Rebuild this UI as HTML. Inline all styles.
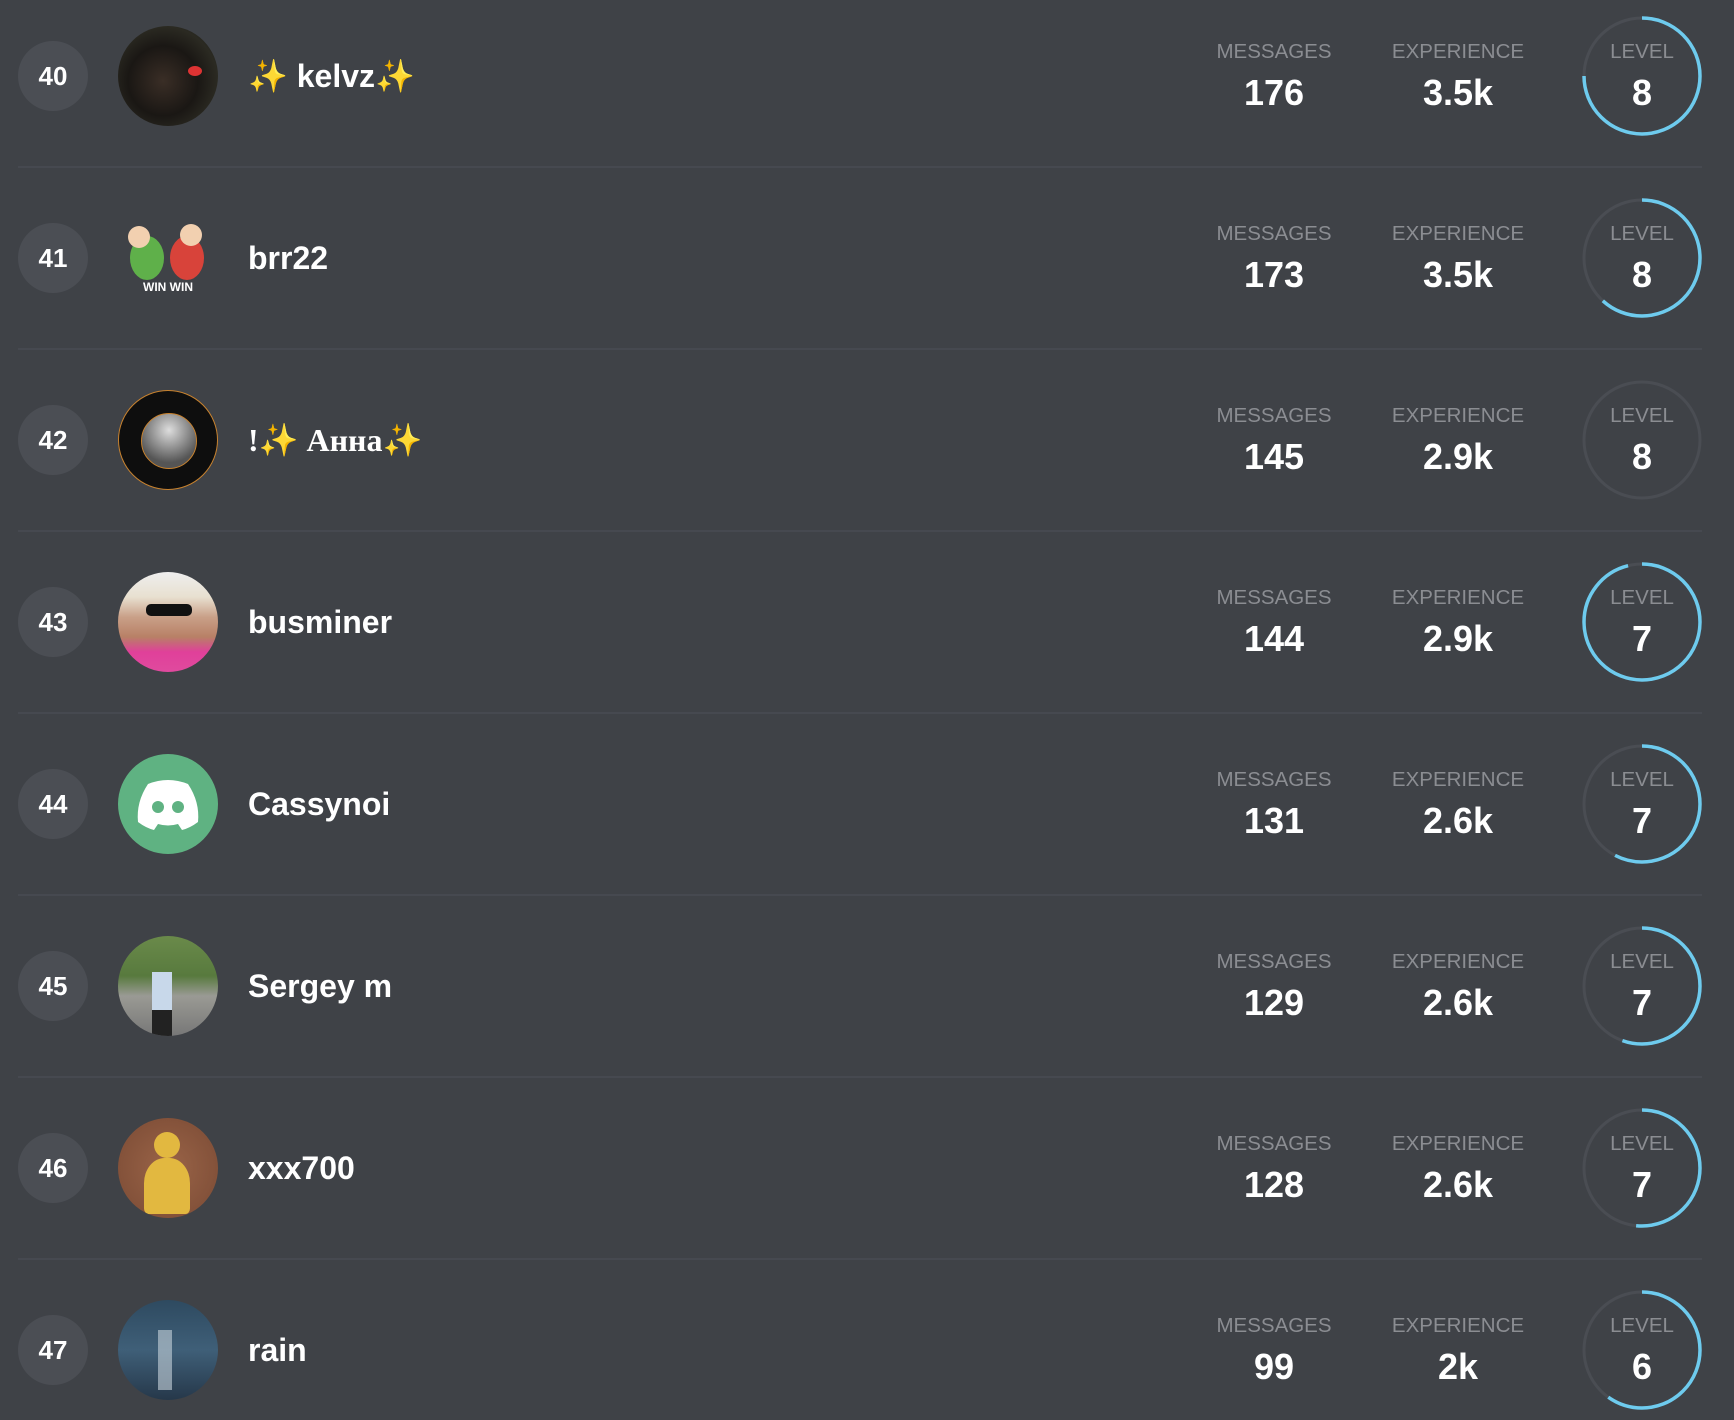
<!DOCTYPE html>
<html style="height:1420px;overflow:hidden"><head><meta charset="utf-8"><style>
html,body{margin:0;height:1420px;overflow:hidden}
body{width:1734px;background:#3f4247;font-family:"Liberation Sans","Noto Sans CJK SC",sans-serif;position:relative}
.row{position:absolute;left:0;width:1734px;height:0}
.sep{position:absolute;left:18px;width:1684px;height:2px;background:#464950}
.rank{position:absolute;left:18px;top:-35px;width:70px;height:70px;border-radius:50%;background:#4b4e54;color:#fff;font-weight:bold;font-size:26px;line-height:70px;text-align:center}
.av{position:absolute;left:118px;top:-50px;width:100px;height:100px;border-radius:50%;overflow:hidden}
.name{position:absolute;left:248px;top:-22px;color:#fff;font-weight:bold;font-size:32px;line-height:44px;white-space:nowrap}
.stat{position:absolute;width:200px;text-align:center}
.lab{position:absolute;top:-36px;width:100%;color:#8b8d92;font-size:20.5px}
.val{position:absolute;top:-4px;width:100%;color:#fff;font-weight:bold;font-size:36px}
.lvl{position:absolute;left:1582px;top:-60px;width:120px;height:120px}
</style></head><body>

<div class="row" style="top:76px">
<div class="rank">40</div>
<div class="av" style="background:radial-gradient(circle at 45% 55%,#3a2e26 0,#1a1714 45%,#2b2a22 70%,#151515 100%)"><div style="position:absolute;left:70px;top:40px;width:14px;height:10px;border-radius:50%;background:#d33"></div></div>
<div class="name"><span style="color:#f5c518">✨</span> kelvz<span style="color:#f5c518">✨</span></div>
<div class="stat" style="left:1174px"><div class="lab">MESSAGES</div><div class="val">176</div></div>
<div class="stat" style="left:1358px"><div class="lab">EXPERIENCE</div><div class="val">3.5k</div></div>
<div class="stat" style="left:1542px"><div class="lab">LEVEL</div><div class="val">8</div></div>
<svg class="lvl" viewBox="0 0 120 120"><circle cx="60" cy="60" r="58" fill="none" stroke="#4a4d53" stroke-width="3"/><circle cx="60" cy="60" r="58" fill="none" stroke="#6ecbee" stroke-width="3.5" stroke-dasharray="273 400" transform="rotate(-90 60 60)"/></svg>
</div>
<div class="sep" style="top:166px"></div>

<div class="row" style="top:258px">
<div class="rank">41</div>
<div class="av" style="background:transparent"><div style="position:absolute;left:12px;top:28px;width:34px;height:44px;border-radius:50%;background:#5fb04a"></div><div style="position:absolute;left:52px;top:28px;width:34px;height:44px;border-radius:50%;background:#d8433a"></div><div style="position:absolute;left:10px;top:18px;width:22px;height:22px;border-radius:50%;background:#f2d0b0"></div><div style="position:absolute;left:62px;top:16px;width:22px;height:22px;border-radius:50%;background:#f2d0b0"></div><div style="position:absolute;left:0;top:72px;width:100px;text-align:center;color:#fff;font-size:12px;font-weight:bold">WIN WIN</div></div>
<div class="name">brr22</div>
<div class="stat" style="left:1174px"><div class="lab">MESSAGES</div><div class="val">173</div></div>
<div class="stat" style="left:1358px"><div class="lab">EXPERIENCE</div><div class="val">3.5k</div></div>
<div class="stat" style="left:1542px"><div class="lab">LEVEL</div><div class="val">8</div></div>
<svg class="lvl" viewBox="0 0 120 120"><circle cx="60" cy="60" r="58" fill="none" stroke="#4a4d53" stroke-width="3"/><circle cx="60" cy="60" r="58" fill="none" stroke="#6ecbee" stroke-width="3.5" stroke-dasharray="225 400" transform="rotate(-90 60 60)"/></svg>
</div>
<div class="sep" style="top:348px"></div>

<div class="row" style="top:440px">
<div class="rank">42</div>
<div class="av" style="background:#0e0e0e;border:1.5px solid #c8822e;box-sizing:border-box"><div style="position:absolute;left:22px;top:22px;width:54px;height:54px;border-radius:50%;background:radial-gradient(circle at 50% 30%,#ddd,#555 70%);border:1.5px solid #c8822e"></div></div>
<div class="name" style="font-family:'Liberation Serif',serif">!<span style="color:#f5c518">✨</span> Анна<span style="color:#f5c518">✨</span></div>
<div class="stat" style="left:1174px"><div class="lab">MESSAGES</div><div class="val">145</div></div>
<div class="stat" style="left:1358px"><div class="lab">EXPERIENCE</div><div class="val">2.9k</div></div>
<div class="stat" style="left:1542px"><div class="lab">LEVEL</div><div class="val">8</div></div>
<svg class="lvl" viewBox="0 0 120 120"><circle cx="60" cy="60" r="58" fill="none" stroke="#4a4d53" stroke-width="3"/></svg>
</div>
<div class="sep" style="top:530px"></div>

<div class="row" style="top:622px">
<div class="rank">43</div>
<div class="av" style="background:linear-gradient(#eee 0,#e8e0d0 25%,#c9a088 45%,#b88066 65%,#e0409a 80%,#e04a9e 100%)"><div style="position:absolute;left:28px;top:32px;width:46px;height:12px;background:#111;border-radius:5px"></div></div>
<div class="name">busminer</div>
<div class="stat" style="left:1174px"><div class="lab">MESSAGES</div><div class="val">144</div></div>
<div class="stat" style="left:1358px"><div class="lab">EXPERIENCE</div><div class="val">2.9k</div></div>
<div class="stat" style="left:1542px"><div class="lab">LEVEL</div><div class="val">7</div></div>
<svg class="lvl" viewBox="0 0 120 120"><circle cx="60" cy="60" r="58" fill="none" stroke="#4a4d53" stroke-width="3"/><circle cx="60" cy="60" r="58" fill="none" stroke="#6ecbee" stroke-width="3.5" stroke-dasharray="350 400" transform="rotate(-90 60 60)"/></svg>
</div>
<div class="sep" style="top:712px"></div>

<div class="row" style="top:804px">
<div class="rank">44</div>
<div class="av" style="background:#5fb282"><svg width="100" height="100" viewBox="0 0 100 100"><path d="M30 30 Q50 22 70 30 Q82 48 80 68 Q72 74 64 76 L60 70 Q50 73 40 70 L36 76 Q28 74 20 68 Q18 48 30 30Z" fill="#fff"/><circle cx="40" cy="53" r="6" fill="#5fb282"/><circle cx="60" cy="53" r="6" fill="#5fb282"/></svg></div>
<div class="name">Cassynoi</div>
<div class="stat" style="left:1174px"><div class="lab">MESSAGES</div><div class="val">131</div></div>
<div class="stat" style="left:1358px"><div class="lab">EXPERIENCE</div><div class="val">2.6k</div></div>
<div class="stat" style="left:1542px"><div class="lab">LEVEL</div><div class="val">7</div></div>
<svg class="lvl" viewBox="0 0 120 120"><circle cx="60" cy="60" r="58" fill="none" stroke="#4a4d53" stroke-width="3"/><circle cx="60" cy="60" r="58" fill="none" stroke="#6ecbee" stroke-width="3.5" stroke-dasharray="210 400" transform="rotate(-90 60 60)"/></svg>
</div>
<div class="sep" style="top:894px"></div>

<div class="row" style="top:986px">
<div class="rank">45</div>
<div class="av" style="background:linear-gradient(#6a8a4a 0,#587a3e 40%,#9a9a94 60%,#777 100%)"><div style="position:absolute;left:34px;top:36px;width:20px;height:40px;background:#c8d8ea"></div><div style="position:absolute;left:34px;top:74px;width:20px;height:26px;background:#222"></div></div>
<div class="name">Sergey m</div>
<div class="stat" style="left:1174px"><div class="lab">MESSAGES</div><div class="val">129</div></div>
<div class="stat" style="left:1358px"><div class="lab">EXPERIENCE</div><div class="val">2.6k</div></div>
<div class="stat" style="left:1542px"><div class="lab">LEVEL</div><div class="val">7</div></div>
<svg class="lvl" viewBox="0 0 120 120"><circle cx="60" cy="60" r="58" fill="none" stroke="#4a4d53" stroke-width="3"/><circle cx="60" cy="60" r="58" fill="none" stroke="#6ecbee" stroke-width="3.5" stroke-dasharray="202 400" transform="rotate(-90 60 60)"/></svg>
</div>
<div class="sep" style="top:1076px"></div>

<div class="row" style="top:1168px">
<div class="rank">46</div>
<div class="av" style="background:radial-gradient(circle,#9a6448,#7a4a34)"><div style="position:absolute;left:36px;top:14px;width:26px;height:26px;border-radius:50%;background:#e2b840"></div><div style="position:absolute;left:26px;top:40px;width:46px;height:56px;border-radius:45% 45% 10% 10%;background:#e2b840"></div></div>
<div class="name">xxx700</div>
<div class="stat" style="left:1174px"><div class="lab">MESSAGES</div><div class="val">128</div></div>
<div class="stat" style="left:1358px"><div class="lab">EXPERIENCE</div><div class="val">2.6k</div></div>
<div class="stat" style="left:1542px"><div class="lab">LEVEL</div><div class="val">7</div></div>
<svg class="lvl" viewBox="0 0 120 120"><circle cx="60" cy="60" r="58" fill="none" stroke="#4a4d53" stroke-width="3"/><circle cx="60" cy="60" r="58" fill="none" stroke="#6ecbee" stroke-width="3.5" stroke-dasharray="188 400" transform="rotate(-90 60 60)"/></svg>
</div>
<div class="sep" style="top:1258px"></div>

<div class="row" style="top:1350px">
<div class="rank">47</div>
<div class="av" style="background:linear-gradient(#2e4a60,#3f5f78 50%,#26384a)"><div style="position:absolute;left:40px;top:30px;width:14px;height:60px;background:#c8d4dc;opacity:.6"></div></div>
<div class="name">rain</div>
<div class="stat" style="left:1174px"><div class="lab">MESSAGES</div><div class="val">99</div></div>
<div class="stat" style="left:1358px"><div class="lab">EXPERIENCE</div><div class="val">2k</div></div>
<div class="stat" style="left:1542px"><div class="lab">LEVEL</div><div class="val">6</div></div>
<svg class="lvl" viewBox="0 0 120 120"><circle cx="60" cy="60" r="58" fill="none" stroke="#4a4d53" stroke-width="3"/><circle cx="60" cy="60" r="58" fill="none" stroke="#6ecbee" stroke-width="3.5" stroke-dasharray="218 400" transform="rotate(-90 60 60)"/></svg>
</div>
</body></html>
